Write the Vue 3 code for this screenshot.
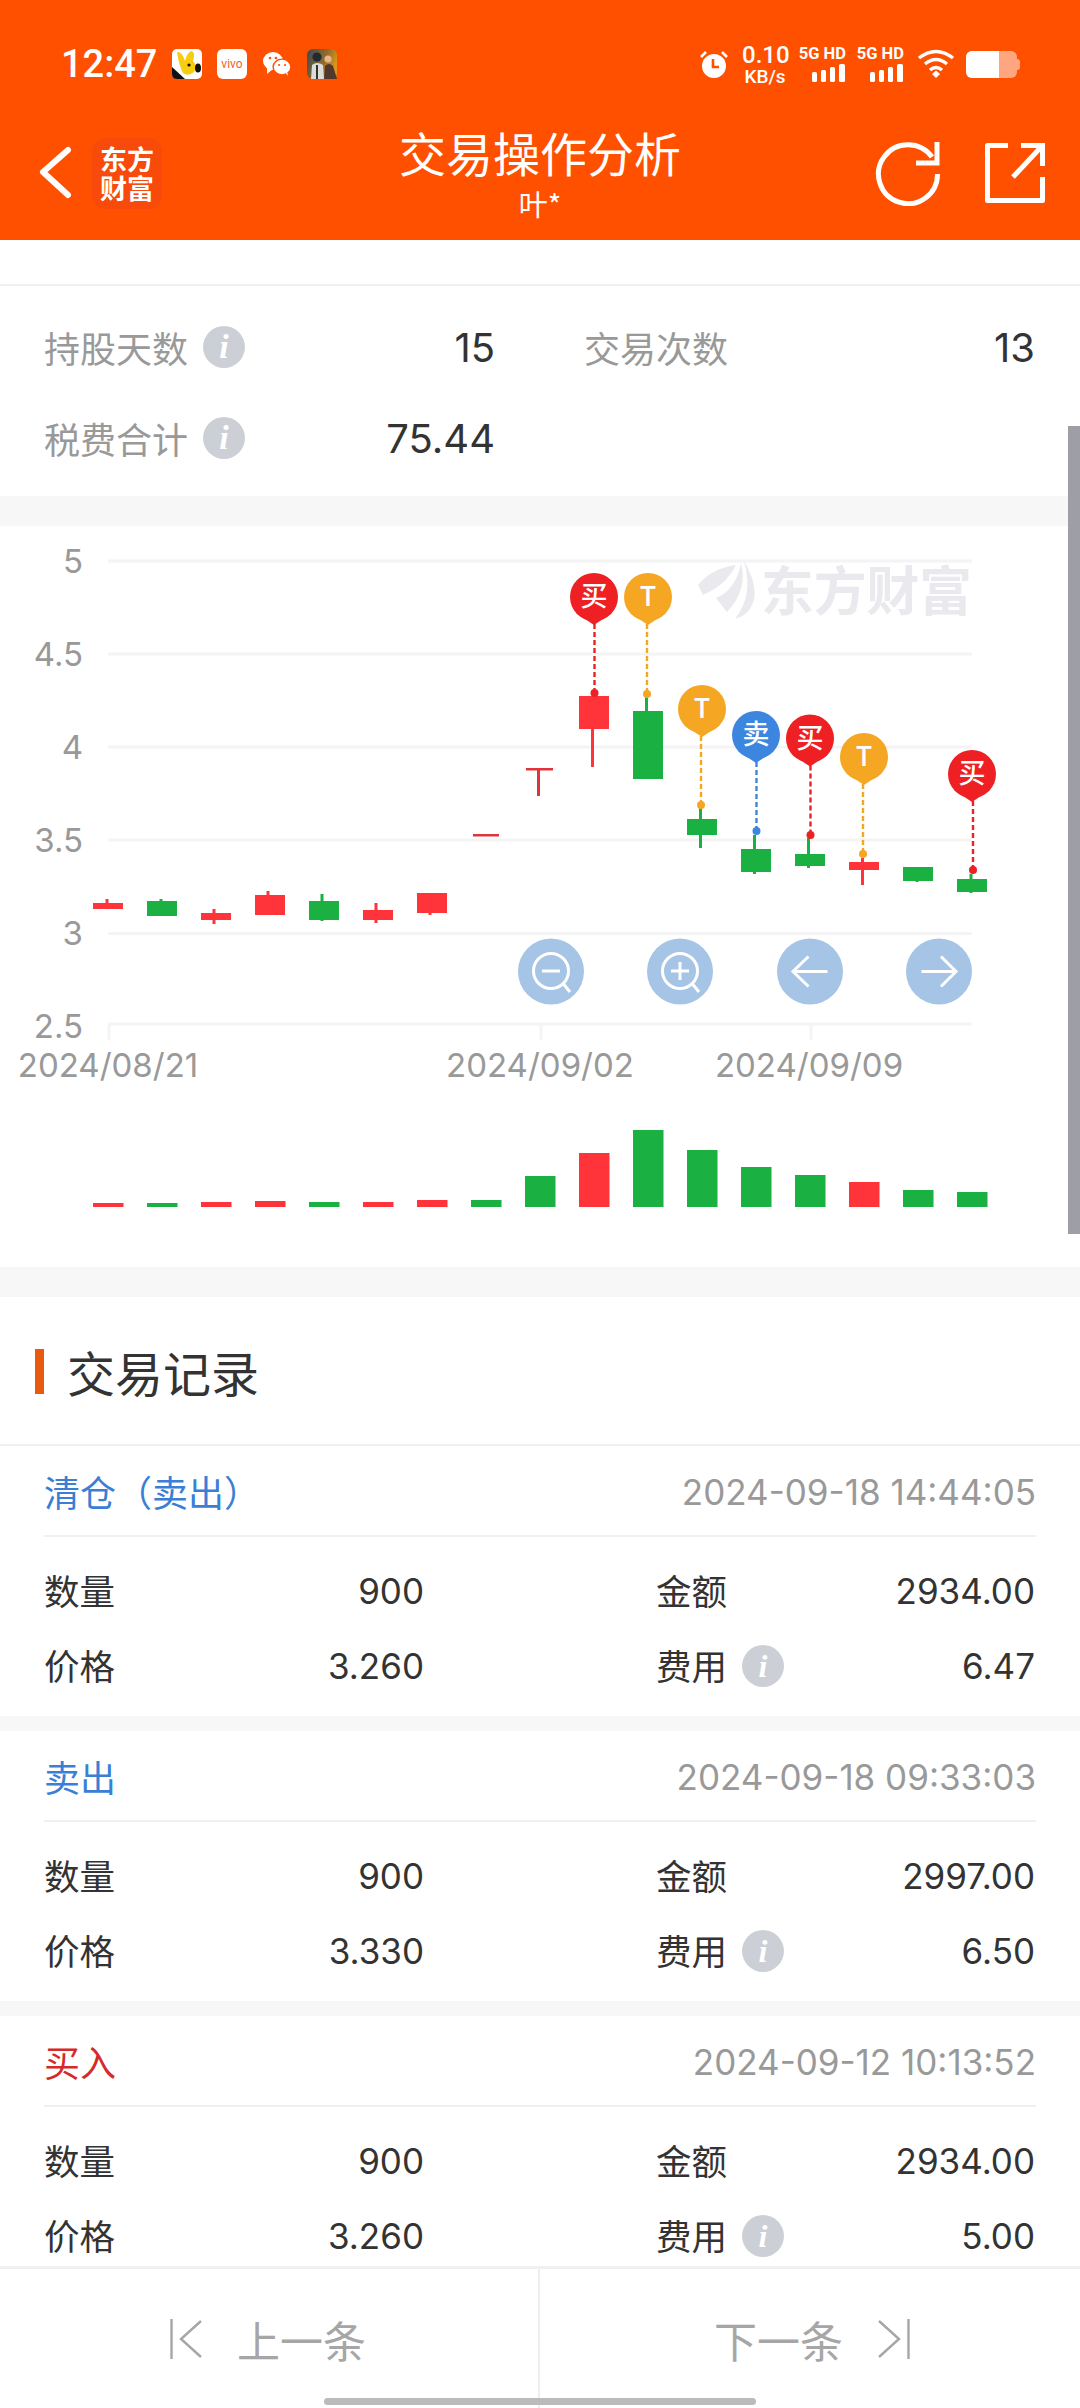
<template>
  <div class="page">
    <header class="top">
      <div class="status">
        <span class="time">12:47</span>
        <svg class="notif" width="176" height="32" viewBox="0 0 176 32">
          <!-- 小程序图标 -->
          <rect x="0" y="1" width="30" height="30" rx="5" fill="#fff" />
          <path d="M0 19 L13 31 H5 Q0 31 0 26Z" fill="#111" />
          <path d="M5 4 Q10 3 13 13 Q15 5 19 3 Q24 4 21 13 Q26 18 22 24 Q16 29 11 25 Q7 18 5 4Z" fill="#f8cc10" />
          <ellipse cx="26" cy="20" rx="3" ry="4.5" fill="#111" />
          <circle cx="17" cy="17" r="1.6" fill="#111" />
          <rect x="45" y="1" width="30" height="30" rx="6" fill="#fff" />
          <text x="60" y="20" text-anchor="middle" class="vivo">vivo</text>
          <ellipse cx="101" cy="13" rx="10" ry="9" fill="#fff" />
          <path d="M95 20 L95 26 L101 21Z" fill="#fff" />
          <ellipse cx="110" cy="19" rx="9.6" ry="8.4" fill="#ff5000" />
          <ellipse cx="110" cy="19" rx="8.2" ry="7.2" fill="#fff" />
          <path d="M113 24 L116 28 L115 23Z" fill="#fff" />
          <circle cx="98" cy="10" r="1.3" fill="#ff5000" />
          <circle cx="104" cy="10" r="1.3" fill="#ff5000" />
          <circle cx="107" cy="17" r="1.1" fill="#ff5000" />
          <circle cx="113" cy="17" r="1.1" fill="#ff5000" />
          <defs>
            <linearGradient id="game" x1="0" y1="0" x2="1" y2="0.4">
              <stop offset="0" stop-color="#3d4a52" />
              <stop offset="0.6" stop-color="#8d6a2c" />
              <stop offset="1" stop-color="#d8951f" />
            </linearGradient>
          </defs>
          <rect x="135" y="1" width="30" height="30" rx="6" fill="url(#game)" />
          <circle cx="145" cy="9" r="4.6" fill="#1f2a33" />
          <path d="M139 31 L140 17 Q145 13 151 17 L152 31Z" fill="#dcdcd8" />
          <path d="M144 17 H146 V31 H144Z" fill="#333" />
          <circle cx="156" cy="11" r="3.6" fill="#e7b48c" />
          <path d="M152 31 L153 18 Q157 14 161 18 L165 31Z" fill="#50382c" />
        </svg>
        <div class="status-right">
          <svg width="30" height="32" viewBox="0 0 30 32">
            <circle cx="15" cy="18" r="12" fill="#fff" />
            <path d="M14 11 V19 H20" fill="none" stroke="#ff5000" stroke-width="2.6" />
            <path d="M2 9 L7 4 M28 9 L23 4" stroke="#fff" stroke-width="2.6" />
          </svg>
          <div class="speed"><b>0.10</b><i>KB/s</i></div>
          <div class="sim" v-for="s in 2" :key="s">
            <span>5G HD</span>
            <svg width="34" height="18" viewBox="0 0 34 18">
              <rect x="0" y="8" width="5" height="10" rx="1.5" fill="#fff" />
              <rect x="9" y="6" width="5" height="12" rx="1.5" fill="#fff" />
              <rect x="18" y="3" width="5" height="15" rx="1.5" fill="#fff" />
              <rect x="27" y="0" width="6" height="18" rx="1.5" fill="#fff" />
            </svg>
          </div>
          <svg class="wifi" width="38" height="30" viewBox="0 0 38 30">
            <path d="M2 9 Q19 -4 36 9" fill="none" stroke="#fff" stroke-width="3.4" />
            <path d="M8 15 Q19 6 30 15" fill="none" stroke="#fff" stroke-width="3.4" />
            <path d="M13 21 Q19 16 25 21" fill="none" stroke="#fff" stroke-width="3.4" />
            <path d="M15 25 L19 21.5 L23 25 L19 29Z" fill="#fff" />
          </svg>
          <div class="battery"><div class="battery-fill"></div></div>
        </div>
      </div>
      <div class="nav">
        <svg class="back" width="34" height="54" viewBox="0 0 34 54">
          <path d="M30 4 L5 26 L30 49" fill="none" stroke="#fff" stroke-width="6" stroke-linecap="round" stroke-linejoin="round" />
        </svg>
        <div class="logo">东方<br />财富</div>
        <div class="nav-title">
          <div class="nav-main">交易操作分析</div>
          <div class="nav-sub">叶*</div>
        </div>
        <svg class="refresh" width="66" height="66" viewBox="0 0 66 66">
          <path d="M62.500 34 A29.500 29.500 0 1 1 57 17" fill="none" stroke="#fff" stroke-width="5" />
          <path d="M41 23 H62 V2" fill="none" stroke="#fff" stroke-width="5" />
        </svg>
        <svg class="share" width="60" height="60" viewBox="0 0 60 60">
          <path d="M23 2.500 H2.500 V57.500 H57.500 V34" fill="none" stroke="#fff" stroke-width="5" stroke-linejoin="round" />
          <path d="M28 34 L57 3 M36 2.500 H57.500 V23" fill="none" stroke="#fff" stroke-width="5" />
        </svg>
      </div>
    </header>

    <main class="content">
      <div class="strip"></div>
      <section class="stats">
        <div class="stat" v-for="s in stats" :key="s.label">
          <span class="stat-label">{{ s.label }}</span>
          <span v-if="s.info" class="info"><em>i</em></span>
          <span class="stat-value">{{ s.value }}</span>
        </div>
      </section>
      <div class="band band-first"></div>

      <section class="chart">
        <svg width="1080" height="741" viewBox="0 526 1080 741">
          <g class="watermark">
            <path d="M698 585 Q712 568 736 565 Q726 585 703 595Z" />
            <path d="M716 598 Q736 590 741 563 Q748 590 727 612Z" />
            <path d="M735 620 Q754 596 744 562 Q760 590 752 606 Q748 616 735 620Z" transform="translate(0 -1)" />
            <text x="761" y="611" textLength="211" lengthAdjust="spacingAndGlyphs">东方财富</text>
          </g>
          <line v-for="y in gridY" :key="y" x1="108" x2="972" :y1="y" :y2="y" class="grid" />
          <line v-for="x in tickX" :key="x" :x1="x" :x2="x" y1="1024" y2="1040" class="grid" />
          <text v-for="l in yLabels" :key="l.text" x="83" :y="l.y + 12" text-anchor="end" class="axis">{{ l.text }}</text>
          <text v-for="l in xLabels" :key="l.text" :x="l.x" y="1077" text-anchor="middle" class="axis">{{ l.text }}</text>

          <g v-for="(c, i) in candles" :key="'c' + i">
            <rect :x="c.wx - 1.500" :y="c.wt" width="3" :height="c.wb - c.wt" :fill="colors[c.k]" />
            <rect :x="c.x" :y="c.t" :width="c.w || 30" :height="c.b - c.t" :fill="colors[c.k]" />
          </g>

          <g v-for="p in pins" :key="p.x">
            <line :x1="p.dx" :x2="p.dx" :y1="p.cy + 27" :y2="p.dy" :stroke="p.color" stroke-width="2.400" stroke-dasharray="5 3" />
            <circle :cx="p.dx" :cy="p.dy" r="4" :fill="p.color" />
            <circle :cx="p.x" :cy="p.cy" r="24" :fill="p.color" />
            <path :d="pinTip(p)" :fill="p.color" />
            <text :x="p.x" :y="p.cy + 9" text-anchor="middle" class="pin-text">{{ p.text }}</text>
          </g>

          <g class="tool">
            <circle cx="551" cy="971.500" r="33" />
            <circle cx="680" cy="971.500" r="33" />
            <circle cx="810" cy="971.500" r="33" />
            <circle cx="939" cy="971.500" r="33" />
          </g>
          <g class="tool-icon">
            <circle cx="551" cy="971" r="17.500" />
            <path d="M542 971 H560 M563.500 984 L570 992" />
            <circle cx="680" cy="971" r="17.500" />
            <path d="M671 971 H689 M680 962 V980 M692.500 984 L699 992" />
            <path d="M793 971.500 H827.500 M808.500 956.500 L793 971.500 L808.500 986.500" />
            <path d="M921.500 971.500 H956 M941 956.500 L956 971.500 L941 986.500" />
          </g>

          <rect v-for="(b, i) in volumes" :key="'v' + i" :x="93 + i * 54" :y="b.t" width="30.500" :height="1207 - b.t" :fill="colors[b.k]" />
        </svg>
      </section>
      <div class="band"></div>

      <section>
        <h2 class="section-title"><span class="mark"></span>交易记录</h2>
        <template v-for="(r, i) in records" :key="r.time">
          <article class="record">
            <div class="record-head">
              <span class="record-type" :class="r.side">{{ r.type }}</span>
              <span class="record-time">{{ r.time }}</span>
            </div>
            <div class="record-body">
              <div class="cell"><span class="cell-label">数量</span><span class="cell-value">{{ r.qty }}</span></div>
              <div class="cell"><span class="cell-label">金额</span><span class="cell-value">{{ r.amount }}</span></div>
              <div class="cell"><span class="cell-label">价格</span><span class="cell-value">{{ r.price }}</span></div>
              <div class="cell">
                <span class="cell-label">费用</span><span class="info small"><em>i</em></span>
                <span class="cell-value">{{ r.fee }}</span>
              </div>
            </div>
          </article>
          <div v-if="i < records.length - 1" class="band thin"></div>
        </template>
      </section>
    </main>

    <footer class="pager">
      <div class="pager-btn">
        <svg width="32" height="42" viewBox="0 0 32 42">
          <path d="M1.500 1 V41 M31 3 L11 21 L31 39" fill="none" stroke="#a6a6a6" stroke-width="2.400" />
        </svg>
        <span class="prev-text">上一条</span>
      </div>
      <div class="pager-btn right">
        <span class="next-text">下一条</span>
        <svg width="32" height="42" viewBox="0 0 32 42">
          <path d="M30.500 1 V41 M1 3 L21 21 L1 39" fill="none" stroke="#a6a6a6" stroke-width="2.400" />
        </svg>
      </div>
    </footer>
    <div class="scrollbar"></div>
    <div class="home-bar"></div>
  </div>
</template>

<script setup>
const stats = [
  { label: '持股天数', info: true, value: '15' },
  { label: '交易次数', info: false, value: '13' },
  { label: '税费合计', info: true, value: '75.44' }
]

const colors = { r: '#ff333a', g: '#1bb042', d: '#e0343a' }
const gridY = [561, 654, 747, 840, 933.5, 1024]
const tickX = [109, 541, 811]
const yLabels = [
  { text: '5', y: 561 },
  { text: '4.5', y: 654 },
  { text: '4', y: 747 },
  { text: '3.5', y: 840 },
  { text: '3', y: 933 },
  { text: '2.5', y: 1026 }
]
const xLabels = [
  { text: '2024/08/21', x: 108 },
  { text: '2024/09/02', x: 540 },
  { text: '2024/09/09', x: 809 }
]

// K线数据，坐标按截图量出来的
const candles = [
  { k: 'r', x: 93, t: 903, b: 909, wx: 107, wt: 899, wb: 905 },
  { k: 'g', x: 147, t: 901, b: 916, wx: 161, wt: 899, wb: 905 },
  { k: 'r', x: 201, t: 913, b: 920, wx: 214, wt: 909, wb: 924 },
  { k: 'r', x: 255, t: 895, b: 915, wx: 268, wt: 891, wb: 900 },
  { k: 'g', x: 309, t: 901, b: 920, wx: 322, wt: 894, wb: 921 },
  { k: 'r', x: 363, t: 910, b: 920, wx: 376, wt: 903, wb: 923 },
  { k: 'r', x: 417, t: 893, b: 913, wx: 430, wt: 893, wb: 915 },
  { k: 'd', x: 473, t: 834, b: 836.5, w: 26, wx: 486, wt: 834, wb: 836 },
  { k: 'd', x: 526, t: 768, b: 770.5, w: 27, wx: 538.5, wt: 768, wb: 796 },
  { k: 'r', x: 579, t: 696, b: 729, wx: 592.5, wt: 696, wb: 767 },
  { k: 'g', x: 633, t: 711, b: 779, wx: 646.5, wt: 696, wb: 712 },
  { k: 'g', x: 687, t: 819, b: 835, wx: 700.5, wt: 808, wb: 848 },
  { k: 'g', x: 741, t: 849, b: 872, wx: 754.5, wt: 835, wb: 874 },
  { k: 'g', x: 795, t: 854, b: 866, wx: 808.5, wt: 838, wb: 868 },
  { k: 'r', x: 849, t: 862, b: 870, wx: 862.5, wt: 858, wb: 885 },
  { k: 'g', x: 903, t: 867, b: 881, wx: 917, wt: 867, wb: 882 },
  { k: 'g', x: 957, t: 879, b: 892, wx: 971, wt: 874, wb: 893 }
]

const red = '#ee2024'
const orange = '#f5a623'
const blue = '#3c86e0'
const pins = [
  { x: 594, cy: 597, dx: 594.5, dy: 693, color: red, text: '买' },
  { x: 648, cy: 597, dx: 647, dy: 694, color: orange, text: 'T' },
  { x: 702, cy: 709, dx: 701, dy: 805, color: orange, text: 'T' },
  { x: 756, cy: 735, dx: 756.5, dy: 831, color: blue, text: '卖' },
  { x: 810, cy: 738.5, dx: 810.5, dy: 835, color: red, text: '买' },
  { x: 864, cy: 757, dx: 863, dy: 854, color: orange, text: 'T' },
  { x: 972, cy: 774, dx: 973, dy: 870, color: red, text: '买' }
]
const pinTip = (p) => `M${p.x - 18} ${p.cy + 16} L${p.x} ${p.cy + 28} L${p.x + 18} ${p.cy + 16}Z`

const volumeTops = [1203, 1203, 1202, 1201, 1202, 1202, 1200, 1200, 1176, 1153, 1130, 1150, 1167, 1175, 1182, 1190, 1192]
const kinds = ['r', 'g', 'r', 'r', 'g', 'r', 'r', 'g', 'g', 'r', 'g', 'g', 'g', 'g', 'r', 'g', 'g']
const volumes = volumeTops.map((t, i) => ({ t, k: kinds[i] }))

const records = [
  { type: '清仓（卖出）', side: 'sell', time: '2024-09-18 14:44:05', qty: '900', amount: '2934.00', price: '3.260', fee: '6.47' },
  { type: '卖出', side: 'sell', time: '2024-09-18 09:33:03', qty: '900', amount: '2997.00', price: '3.330', fee: '6.50' },
  { type: '买入', side: 'buy', time: '2024-09-12 10:13:52', qty: '900', amount: '2934.00', price: '3.260', fee: '5.00' }
]
</script>

<style>
html,
body {
  margin: 0;
  background: #fff;
}
</style>

<style scoped>
.page {
  position: relative;
  width: 1080px;
  height: 2408px;
  overflow: hidden;
  display: flex;
  flex-direction: column;
  background: #fff;
  font-family: Inter, "Noto Sans CJK SC", sans-serif;
  color: #333;
}

.top {
  height: 240px;
  flex: none;
  background: #ff5000;
  color: #fff;
}

.status {
  height: 128px;
  display: flex;
  align-items: center;
  padding-left: 61px;
}

.time {
  font-family: Roboto, sans-serif;
  font-weight: 500;
  font-size: 38px;
  width: 111px;
}

.vivo {
  font-family: Roboto, sans-serif;
  font-size: 12px;
  fill: #f4602a;
}

.status-right {
  margin-left: auto;
  width: 321px;
  margin-right: 60px;
  display: flex;
  align-items: center;
}

.speed {
  width: 46px;
  margin-left: 13px;
  font-family: Roboto, sans-serif;
  line-height: 1;
  text-align: center;
}

.speed b {
  display: block;
  font-weight: 500;
  font-size: 24px;
}

.speed i {
  display: block;
  font-style: normal;
  font-weight: 500;
  font-size: 19px;
}

.sim {
  width: 48px;
  margin-left: 10px;
  font-family: Roboto, sans-serif;
  font-size: 16.5px;
  font-weight: 700;
  line-height: 14px;
  text-align: right;
  white-space: nowrap;
}

.sim span {
  display: block;
  margin-bottom: 3px;
}

.sim svg {
  display: block;
  margin-left: auto;
}

.sim:first-of-type {
  margin-left: 13px;
}

.wifi {
  margin-left: 13px;
}

.battery {
  position: relative;
  width: 51px;
  height: 27px;
  margin-left: 11px;
  border-radius: 6px;
  overflow: visible;
  background: #ffa681;
}

.battery::after {
  content: "";
  position: absolute;
  left: 51px;
  top: 8px;
  width: 3px;
  height: 11px;
  border-radius: 0 3px 3px 0;
  background: #ffa681;
}

.battery-fill {
  width: 33px;
  height: 100%;
  border-radius: 6px 0 0 6px;
  background: #fff;
}

.nav {
  height: 90px;
  position: relative;
  display: flex;
  align-items: center;
}

.back {
  margin-left: 38px;
  flex: none;
}

.logo {
  width: 70px;
  height: 71px;
  margin-left: 20px;
  box-sizing: border-box;
  padding-top: 6px;
  border-radius: 14px;
  background: #f74a0b;
  font-family: "Noto Sans CJK SC", sans-serif;
  font-weight: 700;
  font-size: 27px;
  line-height: 29px;
  text-align: center;
}

.nav-title {
  position: absolute;
  left: 300px;
  right: 300px;
  top: -3px;
  text-align: center;
}

.nav-main {
  font-family: "Noto Sans CJK SC", sans-serif;
  font-size: 47px;
  line-height: 54px;
}

.nav-sub {
  font-family: "Noto Sans CJK SC", sans-serif;
  font-size: 29px;
  line-height: 32px;
  margin-top: 8px;
}

.refresh {
  margin-left: auto;
  flex: none;
}

.share {
  margin-left: 44px;
  margin-right: 35px;
  flex: none;
}

.content {
  flex: 1;
  min-height: 0;
  overflow: hidden;
}

.strip {
  height: 44px;
  border-bottom: 2px solid #f0f0f0;
}

.stats {
  height: 210px;
  box-sizing: border-box;
  padding: 15px 45px 0 44px;
  display: grid;
  grid-template-columns: 451px 451px;
  column-gap: 89px;
  grid-auto-rows: 91px;
}

.stat,
.cell {
  display: flex;
  align-items: center;
}

.stat-label {
  font-size: 36px;
  color: #999;
}

.stat-value {
  margin-left: auto;
  margin-top: 2px;
  font-size: 40px;
  color: #333;
}

.info {
  width: 42px;
  height: 42px;
  margin-left: 15px;
  border-radius: 50%;
  background: #ccd0d6;
  display: flex;
  align-items: center;
  justify-content: center;
}

.info em {
  font-family: "Liberation Serif", serif;
  font-weight: 700;
  font-size: 34px;
  line-height: 1;
  color: #fff;
}

.info.small em {
  font-size: 32px;
}

.band {
  height: 30px;
  background: #f7f7f7;
}

.band.thin {
  height: 15px;
}

.chart {
  height: 741px;
}

.chart svg {
  display: block;
}

.watermark path,
.watermark text {
  fill: #e9e9ee;
}

.watermark text {
  font-size: 53px;
  font-weight: 700;
  font-family: "Noto Sans CJK SC", sans-serif;
}

.grid {
  stroke: #f4f4f4;
  stroke-width: 3;
}

.axis {
  font-size: 33px;
  fill: #999;
}

.pin-text {
  font-family: "Noto Sans CJK SC", sans-serif;
  font-size: 27px;
  font-weight: 500;
  fill: #fff;
}

.tool circle {
  fill: #a6c4e5;
}

.tool-icon circle,
.tool-icon path {
  fill: none;
  stroke: #fff;
  stroke-width: 3;
}

.section-title {
  position: relative;
  height: 149px;
  margin: 0;
  box-sizing: border-box;
  padding-left: 67px;
  border-bottom: 2px solid #f0f0f0;
  font-family: "Noto Sans CJK SC", sans-serif;
  font-weight: 400;
  font-size: 48px;
  line-height: 148px;
  color: #333;
}

.mark {
  position: absolute;
  left: 35px;
  top: 52px;
  width: 9px;
  height: 45px;
  background: #e85a0f;
}

.record {
  height: 270px;
  padding: 0 44px;
}

.record-head {
  height: 91px;
  display: flex;
  align-items: center;
  justify-content: space-between;
  border-bottom: 2px solid #f0f0f0;
  box-sizing: border-box;
}

.record-type {
  font-family: "Noto Sans CJK SC", sans-serif;
  font-size: 36px;
}

.record-type.sell {
  color: #3a7fd5;
}

.record-type.buy {
  color: #d42a2a;
}

.record-time {
  margin-top: 3px;
  font-size: 35px;
  color: #999;
}

.record-body {
  padding-top: 16px;
  display: grid;
  grid-template-columns: 380px 379px;
  column-gap: 232px;
  grid-auto-rows: 75px;
}

.cell-label {
  margin-top: -3px;
  font-family: "Noto Sans CJK SC", sans-serif;
  font-size: 35.5px;
}

.cell-value {
  margin-left: auto;
  font-size: 35px;
}

.pager {
  flex: none;
  height: 142px;
  box-sizing: border-box;
  border-top: 3px solid #f0f0f0;
  display: flex;
}

.pager-btn {
  width: 540px;
  height: 139px;
  box-sizing: border-box;
  padding-left: 170px;
  display: flex;
  align-items: center;
  font-family: "Noto Sans CJK SC", sans-serif;
  font-size: 43px;
  color: #a6a6a6;
  border-right: 2px solid #eee;
}

.pager-btn.right {
  padding-left: 174px;
  border-right: none;
}

.prev-text {
  margin-left: 35px;
}

.next-text {
  margin-right: 35px;
}

.scrollbar {
  position: absolute;
  right: 0;
  top: 426px;
  width: 12px;
  height: 808px;
  background: #9e9ea6;
}

.home-bar {
  position: absolute;
  left: 324px;
  top: 2398px;
  width: 432px;
  height: 7px;
  border-radius: 4px;
  background: #bbb;
}
</style>
